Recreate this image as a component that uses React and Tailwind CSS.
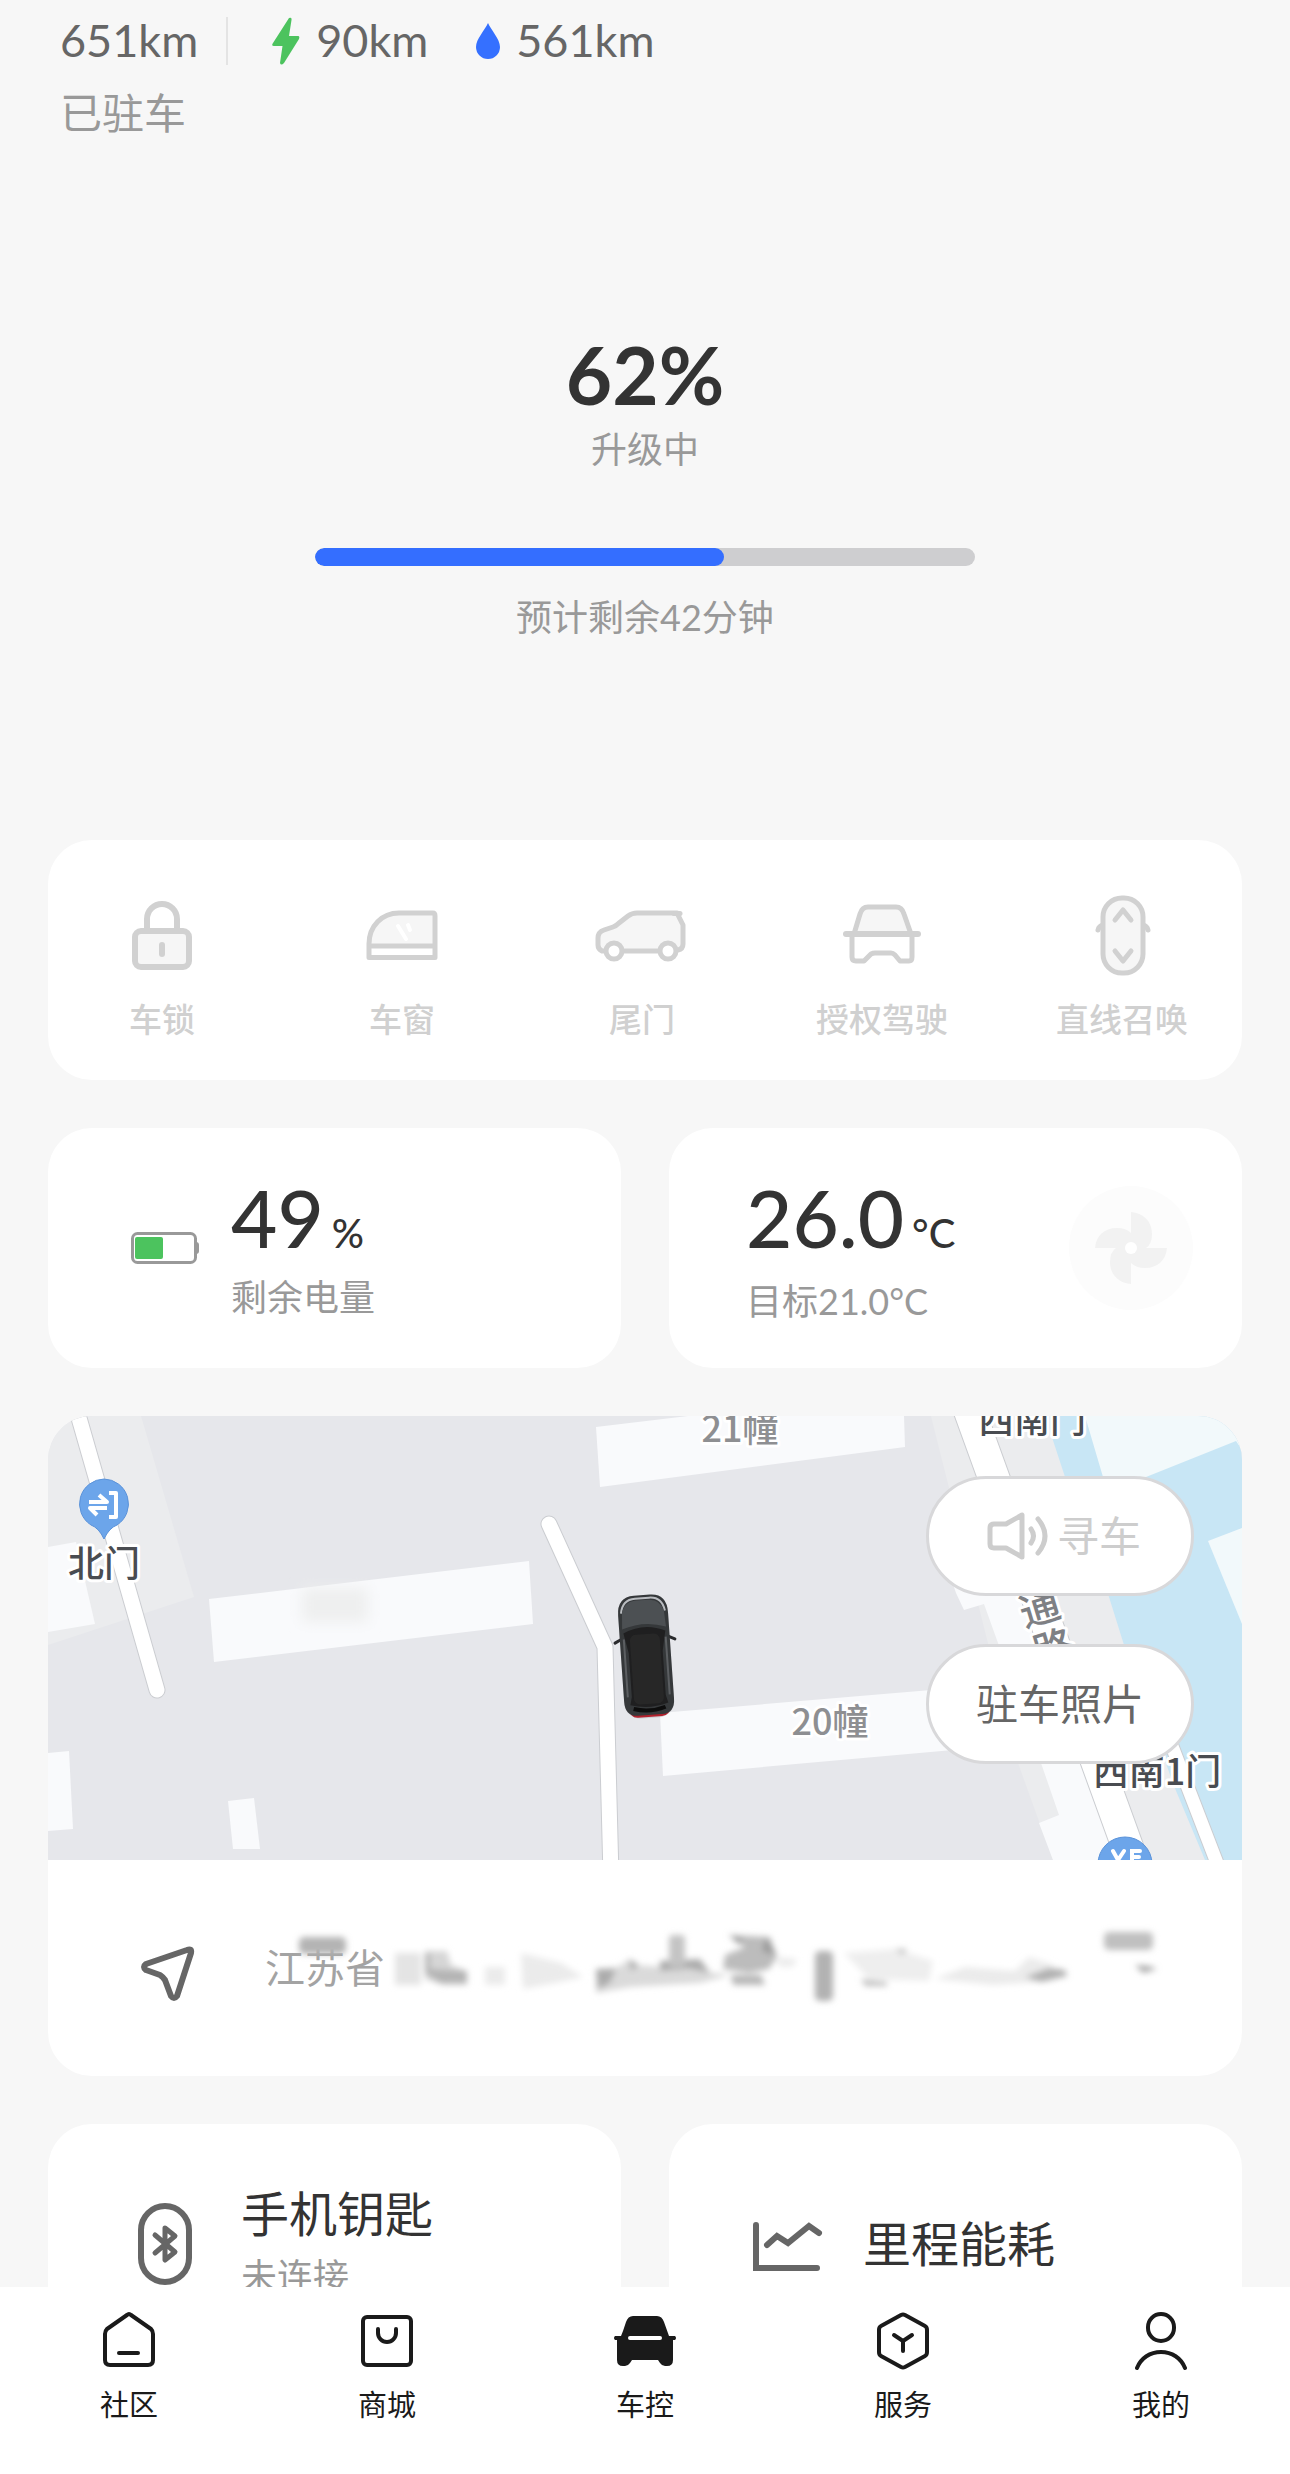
const PROGRESS = 62;

const ACTIONS = [
  { label: '车锁', icon: LockIcon },
  { label: '车窗', icon: WindowIcon },
  { label: '尾门', icon: TailgateIcon },
  { label: '授权驾驶', icon: DriveIcon },
  { label: '直线召唤', icon: SummonIcon },
];

const TABS = [
  { label: '社区', icon: HomeIcon },
  { label: '商城', icon: ShopIcon },
  { label: '车控', icon: CarIcon },
  { label: '服务', icon: ServiceIcon },
  { label: '我的', icon: UserIcon },
];

/* ---------- Quick action icons ---------- */

function ActionSvg({ children }) {
  return (
    <svg
      width="96"
      height="84"
      viewBox="0 0 96 84"
      fill="none"
      stroke="#d1d1d1"
      strokeWidth="6"
      strokeLinecap="round"
      strokeLinejoin="round"
      aria-hidden="true"
    >
      {children}
    </svg>
  );
}

function LockIcon() {
  return (
    <ActionSvg>
      <path d="M33 37V25a15 15 0 0 1 30 0v12" />
      <rect x="21" y="37" width="54" height="36" rx="6" fill="#f6f6f6" />
      <path d="M48 51v9" />
    </ActionSvg>
  );
}

function WindowIcon() {
  return (
    <ActionSvg>
      <path d="M15 51C15 32 28 19 45 19H79Q81 19 81 22V51Z" fill="#f6f6f6" stroke="none" />
      <path d="M44 32l8 13M54 31l2 5" stroke="#fff" strokeWidth="4" />
      <path d="M15 63.500V50C15 32 28 19 45 19H79Q81 19 81 22V63.500Z" strokeWidth="5" />
      <path d="M15 52H81" strokeWidth="5" strokeLinecap="butt" />
    </ActionSvg>
  );
}

function TailgateIcon() {
  return (
    <ActionSvg>
      <path
        d="M8 57Q4 55 4 51V44Q4 38 10 36L19 33Q22 32 25 29L34 22Q38 19 43 19H83L89 31V50Q89 55 84 56L74 57H20Z"
        fill="#f6f6f6"
        strokeWidth="5"
      />
      <path d="M80 19.500h6" strokeWidth="5" />
      <circle cx="20" cy="57" r="8" fill="#fff" strokeWidth="5" />
      <circle cx="74" cy="57" r="8" fill="#fff" strokeWidth="5" />
    </ActionSvg>
  );
}

function DriveIcon() {
  return (
    <ActionSvg>
      <path d="M20 40L26 20Q28 13 34 13H62Q68 13 70 20L77 40Z" fill="#f6f6f6" strokeWidth="5" />
      <path d="M18 40V63Q18 67 22 67H30L37 60Q39 59 41 59H57Q59 59 61 61L66 67H75Q78 67 78 63V40" strokeWidth="5" />
      <path d="M12 40H84" />
    </ActionSvg>
  );
}

function SummonIcon() {
  return (
    <ActionSvg>
      <path d="M24 36q1-4 5-5M74 36q-1-4-5-5" strokeWidth="5" />
      <rect x="29" y="4" width="40" height="75" rx="19" fill="#f6f6f6" strokeWidth="5" />
      <path d="M41 26l8-10 8 10M41 57l8 10 8-10" strokeWidth="5" />
    </ActionSvg>
  );
}

/* ---------- Tab bar icons ---------- */

function TabSvg({ children }) {
  return (
    <svg
      width="64"
      height="60"
      viewBox="-2 0 64 60"
      fill="none"
      stroke="#1a1a1a"
      strokeWidth="4"
      strokeLinecap="round"
      strokeLinejoin="round"
      aria-hidden="true"
    >
      {children}
    </svg>
  );
}

function HomeIcon() {
  return (
    <TabSvg>
      <path d="M6 24Q6 21 8 19L28 5Q30 3 32 5L52 19Q54 21 54 24V50Q54 55 49 55H11Q6 55 6 50Z" />
      <path d="M20 43H39" />
    </TabSvg>
  );
}

function ShopIcon() {
  return (
    <TabSvg>
      <rect x="6" y="7" width="48" height="48" rx="4" />
      <path d="M21 19v4a9 9 0 0 0 18 0v-4" />
    </TabSvg>
  );
}

function CarIcon() {
  return (
    <TabSvg>
      <path
        d="M8 21L11 12Q13 6 18 6H42Q47 6 49 12L54 26H60Q62 28 60 30H58V50Q58 56 52 56H50Q47 56 45 53L43 50H17L15 53Q13 56 10 56H8Q2 56 2 50V30H0Q-2 28 0 26H6Z"
        fill="#1a1a1a"
        stroke="none"
      />
      <path d="M15 28H45" stroke="#fff" />
    </TabSvg>
  );
}

function ServiceIcon() {
  return (
    <TabSvg>
      <path d="M28 5Q30 4 32 5L52 16Q54 17 54 20V42Q54 45 52 46L32 57Q30 58 28 57L8 46Q6 45 6 42V20Q6 17 8 16Z" />
      <path d="M21 25l9 6 9-6M30 31v10" />
    </TabSvg>
  );
}

function UserIcon() {
  return (
    <TabSvg>
      <rect x="17" y="4" width="26" height="27" rx="13" />
      <path d="M6 58C10 48 19 42 30 42S50 48 54 58" />
    </TabSvg>
  );
}

/* ---------- Map ---------- */

function Road({ d, width }) {
  return (
    <g fill="none" strokeLinecap="round" strokeLinejoin="round">
      <path d={d} stroke="#cbcdd1" strokeWidth={width + 2} />
      <path d={d} stroke="#fff" strokeWidth={width} />
    </g>
  );
}

function ParkedCar() {
  return (
    <g transform="translate(598 240) rotate(-4)">
      <rect x="-25" y="-60" width="50" height="122" rx="16" fill="#9a9ca0" opacity="0.35" />
      <path d="M-24 -18l-6 3M24 -18l6 3" stroke="#2a2b2d" strokeWidth="3" strokeLinecap="round" />
      <path d="M-22 50Q-20 61 -12 61H12Q20 61 22 50Z" fill="#b3202c" />
      <path
        d="M-25 -42Q-25 -61 -8 -61H8Q25 -61 25 -42V44Q25 59 12 59H-12Q-25 59 -25 44Z"
        fill="#35383a"
      />
      <path d="M-22 -44Q-20 -58 -7 -58H7Q20 -58 22 -44" fill="none" stroke="#b9bcc0" strokeWidth="2" />
      <path d="M-21 -44Q-18 -56 -6 -56H6Q18 -56 21 -44L22 -28Q0 -36 -22 -28Z" fill="#4c5053" />
      <path d="M-21 -24Q0 -34 21 -24L17 -4V40L19 48Q0 54 -19 48L-17 40V-4Z" fill="#1f1f20" />
      <rect x="-15" y="-22" width="30" height="70" rx="6" fill="#272727" />
      <path d="M-21 -18V40M21 -18V40" stroke="#5c5f62" strokeWidth="2" />
      <path d="M-16 52Q0 57 16 52" fill="none" stroke="#0d0d0d" strokeWidth="4" />
    </g>
  );
}

function MapView() {
  return (
    <svg
      viewBox="0 0 1194 444"
      preserveAspectRatio="xMidYMid slice"
      className="block h-[444px] w-full bg-[#e6e7eb]"
      role="img"
      aria-label="车辆位置"
    >
      <defs>
        <filter id="mapSmudge" x="-30%" y="-30%" width="160%" height="160%">
          <feGaussianBlur stdDeviation="7" />
        </filter>
      </defs>

      <path d="M0 0H93L146 181L0 229Z" fill="#ebecee" />
      <path d="M883 0L970 347L1005 444H1194V0Z" fill="#ebecee" />

      {/* water */}
      <path d="M997 0L1017 61L1061 181L1076 229L1126 370L1157 444H1194V0Z" fill="#c8e6f5" />
      <path d="M1037 0L1055 61H1098L1188 25L1194 34V0Z" fill="#f2f9fb" />
      <path d="M1160 125L1194 112V208Z" fill="#f2f9fb" />

      {/* buildings */}
      <g fill="#f9fafc">
        <path d="M0 131L28 126L47 208L0 216Z" />
        <path d="M161 183L481 145L485 208L166 246Z" />
        <path d="M0 337L21 335L25 413L0 415Z" />
        <path d="M180 385L206 382L212 433H185Z" />
        <path d="M548 11L640 0H856L857 31L552 71Z" />
        <path d="M612 297L895 273L905 334L615 360Z" />
        <path d="M892 130L908 177L916 194L936 188L993 347L1011 399L991 407L1005 444H1090L960 60Z" />
      </g>
      <rect x="254" y="172" width="66" height="34" fill="#eeefef" filter="url(#mapSmudge)" />

      <Road d="M27 -12L109 274" width={15} />
      <Road d="M501 108L557 231L563 460" width={15} />
      <Road d="M919 -12L1090 460" width={31} />
      <Road d="M1122 325L1174 460" width={13} />

      <ParkedCar />

      {/* gate pins */}
      <path d="M56 63a25 25 0 0 1 13 46Q61 112 56 123Q51 112 43 109a25 25 0 0 1 13-46Z" fill="#6ca5ea" stroke="#5a92d9" />
      <g fill="none" stroke="#fff" strokeWidth="4" strokeLinejoin="round">
        <path d="M61 77h7v24h-7" />
        <path d="M41 86h18l-8-7M59 92H42l7 7" />
      </g>
      <circle cx="1077" cy="448" r="27" fill="#6ca5ea" stroke="#5a92d9" />
      <path d="M1065 435l5 9 6-9M1092 435h-8v12M1084 441h7" fill="none" stroke="#fff" strokeWidth="4" strokeLinecap="round" />

      <g fontFamily="'Noto Sans CJK SC', sans-serif" fontWeight="500" fontSize="36" stroke="#fff" strokeWidth="6" strokeLinejoin="round" paintOrder="stroke" textAnchor="middle">
        <text x="692" y="26" fill="#8e8f92">21幢</text>
        <text x="782" y="319" fill="#8e8f92">20幢</text>
        <text x="56" y="161" fill="#494c51">北门</text>
        <text x="984" y="17" fill="#494c51">西南门</text>
        <text x="1109" y="369" fill="#494c51">西南1门</text>
        <text x="0" y="0" fill="#7e8084" fontSize="40" transform="translate(996 206) rotate(-17)">通</text>
        <text x="0" y="0" fill="#7e8084" fontSize="40" transform="translate(1010 246) rotate(-17)">路</text>
      </g>
    </svg>
  );
}

// Only the province stays readable, the rest of the address is wiped over
function AddressSmudge() {
  return (
    <svg viewBox="0 0 800 90" className="h-[90px] w-[800px] min-w-0 shrink overflow-visible" preserveAspectRatio="xMinYMid slice" aria-hidden="true">
      <defs>
        <filter id="smudge" x="-10%" y="-40%" width="120%" height="180%">
          <feGaussianBlur stdDeviation="3" />
        </filter>
      </defs>
      <g filter="url(#smudge)">
        <rect x="-86" y="14" width="47" height="17" rx="5" fill="#b4b4b4" />
        <path d="M10 30h26v32H10z" fill="#e4e4e4" />
        <path d="M40 28h22l4 14 16 6v14H58L40 56z" fill="#d6d6d6" />
        <path d="M40 30h5v16l37 2v12H56L40 50z" fill="#b4b4b4" />
        <path d="M100 44h20v18h-20zM136 30l40 10 22 14-28 6-32 6z" fill="#ebebeb" />
        <path d="M211 46l22-2 12-8 6 6 30 2 64 8-30 8-70 4-34 6z" fill="#dadada" />
        <path d="M211 46h20l-6 14-12 6zM244 36l10 6-8 6zM275 38l40-2 10 14-22-4-28 2z" fill="#acacac" />
        <rect x="284" y="12" width="16" height="32" rx="4" fill="#c4c4c4" />
        <path d="M343 12l42 2 7 20-8 12-20 4-26-4 2-14 20-8z" fill="#bcbcbc" />
        <path d="M345 12l14 4-6 5zM381 14l10 18-14-4z" fill="#999" />
        <path d="M346 52h30l4 10h-32z" fill="#b8b8b8" />
        <path d="M392 34l20 2-4 8h-14z" fill="#ececec" />
        <rect x="430" y="28" width="18" height="50" rx="5" fill="#b2b2b2" />
        <path d="M459 30l52-4 37 12-4 20-60-2z" fill="#eee" />
        <path d="M510 26h12l-4 6zM476 56l26 3v4h-22z" fill="#c0c0c0" />
        <path d="M550 56l30-12 50 4 14-14 24 8v16l-60 4z" fill="#ebebeb" />
        <path d="M640 54l24-9 16 2 2 6-26 6z" fill="#b0b0b0" />
        <rect x="719" y="9" width="49" height="18" rx="5" fill="#c0c0c0" />
        <path d="M750 42l14 1 8 3-14 4z" fill="#a8a8a8" />
      </g>
    </svg>
  );
}

export default function App() {
  return (
    <div className="flex h-screen flex-col bg-[#f7f7f7] font-['Lato','Noto_Sans_CJK_SC',sans-serif] text-[#333]">
      <main className="min-h-0 flex-1 overflow-y-auto px-12 [scrollbar-width:none]">
        <header className="px-3 pt-2">
          <div className="flex h-[66px] items-center text-[45px] text-[#666]">
            <span>651km</span>
            <span className="ml-7 h-12 w-[2px] bg-[#e4e4e4]" />
            <span className="ml-11 flex items-center gap-4">
              <svg width="28" height="48" viewBox="0 0 28 48" aria-hidden="true">
                <path d="M17 1Q20 0 19.500 3L17 19H26Q28 19 27 22L12 46Q9 49 8 46L10.500 29H2Q-1 29 1 26Z" fill="#4cc35e" />
              </svg>
              90km
            </span>
            <span className="ml-12 flex items-center gap-4">
              <svg width="24" height="36" viewBox="0 0 24 36" aria-hidden="true">
                <path d="M12 0C15 7 24 16 24 24A12 12 0 0 1 0 24C0 16 9 7 12 0Z" fill="#3570ff" />
              </svg>
              561km
            </span>
          </div>
          <p className="mt-[11px] text-[42px] leading-[56px] text-[#999]">已驻车</p>
        </header>

        <section className="mt-[193px] flex flex-col items-center text-[36px] leading-[48px] text-[#999]">
          <h1 className="text-[80px] leading-[80px] font-bold text-[#333]">{PROGRESS}%</h1>
          <p className="mt-[11px]">升级中</p>
          <div
            className="mt-[75px] h-[18px] w-[660px] max-w-full overflow-hidden rounded-full bg-[#ceced0]"
            role="progressbar"
            aria-label="升级进度"
            aria-valuenow={PROGRESS}
            aria-valuemin={0}
            aria-valuemax={100}
          >
            <div className="h-full rounded-full bg-[#346eff]" style={{ width: `${PROGRESS}%` }} />
          </div>
          <p className="mt-[27px]">预计剩余42分钟</p>
        </section>

        <section className="mt-[199px] h-[240px] rounded-[44px] bg-white">
          <div className="-ml-1.5 grid grid-cols-5">
            {ACTIONS.map(({ label, icon: Icon }) => (
              <button key={label} type="button" disabled className="flex flex-col items-center pt-[54px]">
                <Icon />
                <span className="mt-4 text-[33px] leading-[50px] font-medium text-[#d0d0d0]">{label}</span>
              </button>
            ))}
          </div>
        </section>

        <div className="mt-12 grid grid-cols-2 gap-12">
          <section className="flex h-[240px] items-center rounded-[44px] bg-white pl-[83px]">
            <svg width="68" height="32" viewBox="0 0 68 32" fill="none" aria-hidden="true">
              <rect x="1.500" y="1.500" width="63" height="29" rx="5" stroke="#999" strokeWidth="3" />
              <path d="M65 10q3 0 3 3v6q0 3-3 3z" fill="#999" />
              <rect x="4" y="5" width="28" height="22" rx="2" fill="#4cc35e" />
            </svg>
            <div className="mt-0.5 ml-8">
              <p className="flex items-baseline gap-2 text-[80px] leading-[80px] font-medium">
                49<span className="text-[40px]">%</span>
              </p>
              <p className="text-[36px] leading-[48px] text-[#999]">剩余电量</p>
            </div>
          </section>
          <section className="flex h-[240px] items-center justify-between rounded-[44px] bg-white pr-[49px] pl-[77px]">
            <div className="mt-1.5">
              <p className="flex items-baseline gap-2 text-[80px] leading-[80px] font-medium">
                26.0<span className="text-[40px]">°C</span>
              </p>
              <p className="mt-1 text-[36px] leading-[48px] text-[#999]">目标21.0°C</p>
            </div>
            <button type="button" disabled aria-label="空调" className="rounded-full bg-[#fcfcfc]">
              <svg width="124" height="124" viewBox="-62 -62 124 124" fill="#f2f2f2" aria-hidden="true">
                <path d="M0 -36C12 -35 21 -27 21 -14Q21 -4 15 0H36C35 12 27 20 14 20Q5 20 0 15V36C-12 35 -21 27 -21 14Q-21 4 -15 0H-36C-35 -12 -27 -20 -14 -20Q-5 -20 0 -15Z" />
                <circle r="6" fill="#fff" />
              </svg>
            </button>
          </section>
        </div>

        <section className="mt-12 overflow-hidden rounded-[44px] bg-white">
          <div className="relative">
            <MapView />
            <div className="absolute top-[60px] right-12 flex flex-col gap-12">
              <button
                type="button"
                disabled
                className="flex h-[120px] w-[268px] items-center justify-center gap-2 rounded-full border-3 border-[#d8d8da] bg-white pl-2 text-[42px] text-[#cdcdcd]"
              >
                <svg width="62" height="48" viewBox="0 0 62 48" fill="none" stroke="#cdcdcd" strokeWidth="5" strokeLinecap="round" strokeLinejoin="round" aria-hidden="true">
                  <path d="M3 16Q3 12 7 12H19L35 3V45L19 36H7Q3 36 3 32Z" />
                  <path d="M44 17Q49 24 44 31M51 7Q65 24 51 41" />
                </svg>
                寻车
              </button>
              <button
                type="button"
                className="h-[120px] w-[268px] rounded-full border-3 border-[#d8d8da] bg-white text-[42px] text-[#666]"
              >
                驻车照片
              </button>
            </div>
          </div>
          <div className="flex h-[216px] items-center pl-[92px]">
            <svg width="56" height="58" viewBox="0 0 56 58" fill="none" stroke="#666" strokeWidth="6" strokeLinejoin="round" className="mt-3" aria-hidden="true">
              <path d="M47 5Q52 3 51 8L37 51Q34 55 31 51L25 35Q23 32 20 30L6 25Q2 22 6 19Z" />
            </svg>
            <p className="ml-[69px] text-[40px] whitespace-nowrap text-[#a3a3a3]">江苏省</p>
            <AddressSmudge />
          </div>
        </section>

        <div className="mt-12 grid grid-cols-2 gap-12">
          <a href="#key" className="flex h-[240px] items-center rounded-[44px] bg-white pl-[90px]">
            <svg width="54" height="82" viewBox="0 0 54 82" fill="none" stroke="#666" strokeLinecap="round" strokeLinejoin="round" aria-hidden="true">
              <rect x="3" y="3" width="48" height="76" rx="24" strokeWidth="6" />
              <path d="M17 32L37 49L27 57V25L37 33L17 50" strokeWidth="5" />
            </svg>
            <span className="ml-[49px] block">
              <span className="block text-[48px] leading-[64px] text-[#333]">手机钥匙</span>
              <span className="block text-[36px] leading-[60px] text-[#999]">未连接</span>
            </span>
          </a>
          <a href="#energy" className="flex h-[240px] items-center rounded-[44px] bg-white pl-[84px]">
            <svg width="70" height="50" viewBox="0 0 70 50" fill="none" stroke="#666" strokeWidth="6" strokeLinecap="round" className="mt-1.5" aria-hidden="true">
              <path d="M3 3V46H64" />
              <path d="M14 23L24 14L35 21L56 4L66 11" />
            </svg>
            <span className="ml-10 text-[48px]">里程能耗</span>
          </a>
        </div>
      </main>

      <nav className="grid h-[187px] shrink-0 grid-cols-5 bg-white">
        {TABS.map(({ label, icon: Icon }) => (
          <a key={label} href={`#${label}`} className="flex flex-col items-center pt-[23px] text-[29px] leading-[44px] text-[#1a1a1a]">
            <Icon />
            <span className="mt-[13px]">{label}</span>
          </a>
        ))}
      </nav>
    </div>
  );
}
